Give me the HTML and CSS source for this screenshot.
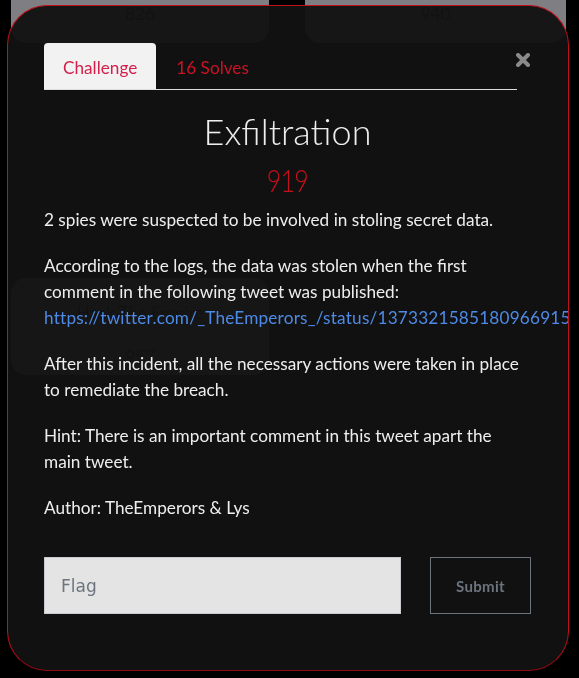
FILE: index.html
```html
<!DOCTYPE html>
<html lang="en">
<head>
<meta charset="utf-8">
<title>Exfiltration</title>
<link rel="stylesheet" href="styles.css">
</head>
<body>
  <main class="board">
    <div class="grid grid--top">
      <div class="card card--top"><div class="card-name">Hidden</div><div class="card-score">826</div></div>
      <div class="card card--top"><div class="card-name">Hidden</div><div class="card-score">940</div></div>
    </div>
    <div class="category-spacer"></div>
    <div class="grid">
      <div class="card"><div class="card-name">Hack The Empire</div><div class="card-score">957</div></div>
    </div>
  </main>

  <div class="overlay">
    <div class="dialog">
      <button class="close" aria-label="Close">
        <svg width="14" height="14" viewBox="0 0 14 14"><path d="M2 2 L12 12 M12 2 L2 12" stroke="#8a8a8a" stroke-width="4" stroke-linecap="round"/></svg>
      </button>
      <nav class="tabs">
        <span class="tab tab--active">Challenge</span>
        <span class="tab">16 Solves</span>
      </nav>
      <h2 class="title">Exfiltration</h2>
      <div class="points"><span class="points-num">919</span></div>
      <div class="desc">
        <p>2 spies were suspected to be involved in stoling secret data.</p>
        <p>According to the logs, the data was stolen when the first comment in the following tweet was published: <a href="#">https://twitter.com/_TheEmperors_/status/1373321585180966915</a></p>
        <p>After this incident, all the necessary actions were taken in place to remediate the breach.</p>
        <p>Hint: There is an important comment in this tweet apart the main tweet.</p>
        <p>Author: TheEmperors &amp; Lys</p>
      </div>
      <form class="submit-row">
        <input class="flag-input" type="text" placeholder="Flag">
        <button class="submit-btn" type="button">Submit</button>
      </form>
    </div>
  </div>
</body>
</html>
```

FILE: styles.css
```css
html, body {
  margin: 0;
  padding: 0;
  background: #000;
  height: 100%;
  overflow: hidden;
}

body {
  font-family: Lato, "Open Sans", sans-serif;
}

.board {
  padding: 0 0 0 11px;
  margin-top: -54px;
}

.grid {
  display: grid;
  grid-template-columns: 258px 261px;
  column-gap: 36px;
}

.category-spacer {
  height: 235px;
}

.card {
  background: #7f7f83;
  border-radius: 15px;
  height: 97px;
  box-sizing: border-box;
  padding-top: 24px;
  text-align: center;
  color: #1d1d1d;
  font-size: 17px;
  line-height: 22px;
}

.card-score {
  margin-top: 22px;
}

.card--top {
  padding-top: 13px;
}

.card--top .card-name {
  visibility: hidden;
}

.overlay {
  position: fixed;
  inset: 0;
}

.dialog {
  position: absolute;
  top: 5px;
  left: 7px;
  width: 562px;
  height: 666px;
  box-sizing: border-box;
  border: 1px solid #c0101c;
  border-bottom-color: #8c0a12;
  border-radius: 40px;
  background: rgba(18, 18, 18, 0.96);
  padding: 37px 37px 0 36px;
  overflow: hidden;
  color: #eeeeee;
}

.close {
  position: absolute;
  top: 47px;
  right: 38px;
  background: none;
  border: 0;
  padding: 0;
  width: 14px;
  height: 14px;
  display: block;
}

.close svg {
  display: block;
}

.tabs {
  display: flex;
  margin-right: 14px;
  border-bottom: 1px solid #dddddd;
  height: 46px;
  box-sizing: content-box;
}

.tab {
  display: flex;
  align-items: center;
  padding: 2px 20px 0 20px;
  font-size: 17.2px;
  color: #cc1224;
  border-radius: 4px 4px 0 0;
}

.tab--active {
  background: #f2f2f2;
  color: #d21f4b;
  padding: 2px 19px 0 19px;
}

.title {
  margin: 19px 0 0;
  text-align: center;
  font-weight: 300;
  font-size: 36px;
  line-height: 44px;
  color: #eeeeee;
}

.points {
  margin-top: 7px;
  text-align: center;
  font-weight: 300;
  font-size: 32px;
  line-height: 40px;
  color: #c2101c;
}

.points-num {
  display: inline-block;
  transform: scaleX(0.78);
  letter-spacing: -1px;
}

.desc {
  margin-top: 7px;
  font-size: 17.2px;
  line-height: 26px;
}

.desc p {
  margin: 0 0 20px;
}

.desc a {
  color: #4e8ae6;
  text-decoration: none;
  white-space: nowrap;
  letter-spacing: 0.2px;
}

.submit-row {
  display: flex;
  gap: 29px;
  margin-top: 36px;
  align-items: flex-start;
}

.flag-input {
  flex: 1;
  height: 57px;
  box-sizing: border-box;
  background: #e4e4e4;
  border: 1px solid #c8cbcf;
  padding: 0 16px;
  font-family: "DejaVu Sans", sans-serif;
  font-size: 17px;
  color: #333;
  outline: none;
}

.flag-input::placeholder {
  color: #6c757d;
}

.submit-btn {
  width: 101px;
  height: 57px;
  box-sizing: border-box;
  background: transparent;
  border: 1px solid #6c757d;
  color: #6c757d;
  font-family: Lato, sans-serif;
  font-weight: 700;
  font-size: 15px;
  letter-spacing: 0.3px;
}
```
